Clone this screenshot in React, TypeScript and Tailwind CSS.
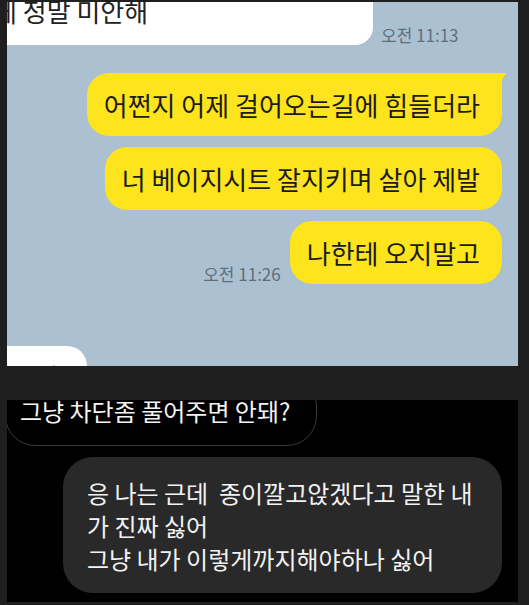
const YellowTail = () => (
  <svg
    className="absolute -right-[6px] top-0"
    width="14"
    height="14"
    viewBox="0 0 14 14"
  >
    <path d="M0 0 H13 Q8 4 6 13 L0 13 Z" fill="#fde41c" />
  </svg>
);

const MyBubble = ({ text, tail }: { text: string; tail?: boolean }) => (
  <div
    className={`relative h-[63px] flex items-center pl-[17px] pr-[22px] bg-[#fde41c] text-[#1b1b1b] text-[26px] rounded-[22px] ${
      tail ? "rounded-tr-[4px]" : ""
    }`}
  >
    {tail && <YellowTail />}
    <span className="whitespace-nowrap leading-none">{text}</span>
  </div>
);

const darkLines = [
  "응 나는 근데  종이깔고앉겠다고 말한 내",
  "가 진짜 싫어",
  "그냥 내가 이렇게까지해야하나 싫어",
];

export default function App() {
  return (
    <div className="w-[529px] h-[605px] overflow-hidden bg-[#1f1f1f] pt-[2px] pl-[7px] pr-[11px] flex flex-col font-[family-name:'Noto_Sans_CJK_KR','Noto_Sans',sans-serif]">
      {/* 카톡 캡처 */}
      <div className="h-[364px] bg-[#abc1d1] flex flex-col overflow-hidden">
        <div className="flex items-end">
          <div className="w-[366px] h-[43px] bg-white rounded-br-[18px] overflow-hidden">
            <p className="-mt-[4px] -ml-[14px] text-[26px] leading-[26px] text-[#222] whitespace-nowrap">
              게 정말 미안해
            </p>
          </div>
          <span className="ml-[8px] mb-[2px] text-[17px] leading-none text-[#5f6e7c]">
            오전 11:13
          </span>
        </div>

        <div className="mt-[28px] flex flex-col items-end gap-[11px] pr-[16px]">
          <MyBubble text="어쩐지 어제 걸어오는길에 힘들더라" tail />
          <MyBubble text="너 베이지시트 잘지키며 살아 제발" />
          <div className="flex items-end gap-[9px]">
            <span className="mb-[2px] text-[17px] leading-none text-[#5f6e7c]">
              오전 11:26
            </span>
            <MyBubble text="나한테 오지말고" />
          </div>
        </div>

        <div className="flex-1" />
        <div className="w-[80px] h-[20px] bg-white rounded-tr-[20px] overflow-hidden">
          <p className="mt-[18px] ml-[8px] text-[24px] leading-[24px] text-[#222] whitespace-nowrap">
            그냥
          </p>
        </div>
      </div>

      {/* 인스타 DM 캡처 */}
      <div className="mt-[34px] h-[202px] bg-black overflow-hidden flex flex-col">
        <div className="-mt-[24px] -ml-[2px] w-[312px] h-[70px] shrink-0 border border-[#3a3a3a] rounded-[30px] flex items-center pl-[14px]">
          <span className="text-[24px] leading-none text-[#f2f2f2] whitespace-nowrap">
            그냥 차단좀 풀어주면 안돼?
          </span>
        </div>

        <div className="mt-[11px] ml-[56px] w-[439px] bg-[#292929] rounded-[30px] pl-[24px] pt-[19px] pb-[18px]">
          {darkLines.map((line, i) => (
            <p
              key={i}
              className="text-[24px] leading-[33px] text-[#f2f2f2] whitespace-pre"
            >
              {line}
            </p>
          ))}
        </div>
      </div>
    </div>
  );
}
